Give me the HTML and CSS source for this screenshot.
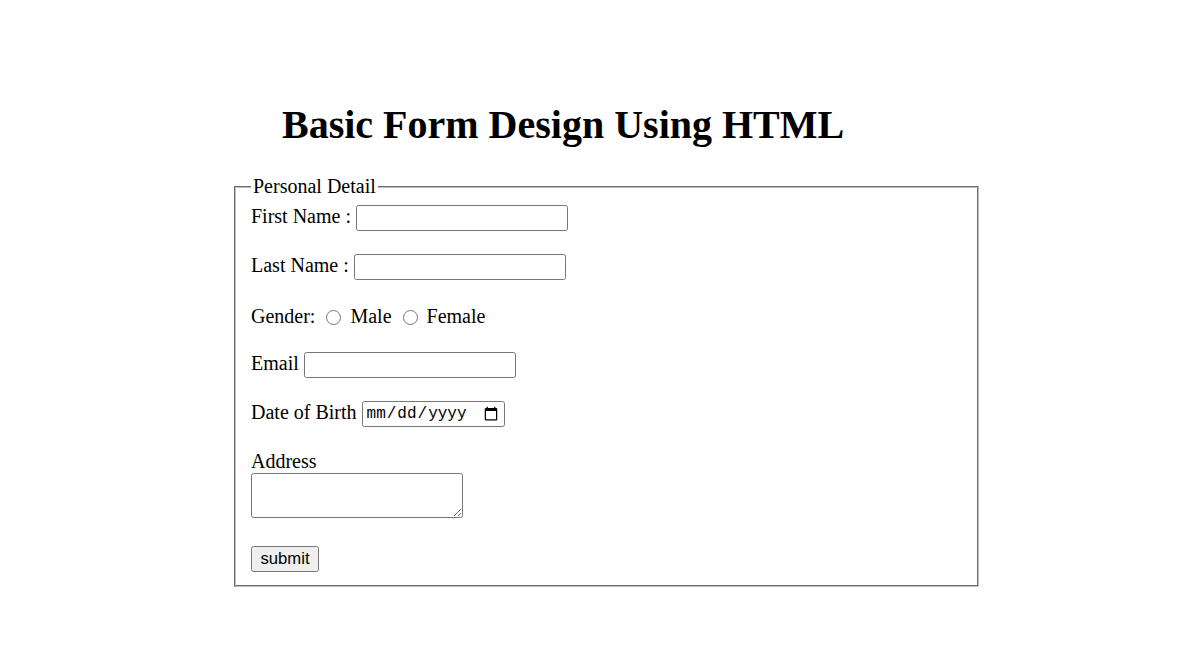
FILE: index.html
```html
<!DOCTYPE html>
<html lang="en">
<head>
<meta charset="utf-8">
<title>Basic Form Design Using HTML</title>
<link rel="stylesheet" href="styles.css">
</head>
<body>
<div class="page">
  <h1 class="title">Basic Form Design Using HTML</h1>
  <form class="form" onsubmit="return false">
    <fieldset class="panel">
      <legend class="legend">Personal Detail</legend>
      <div class="rows">
        <div class="row">
          <label class="label" for="fname">First Name :</label>
          <input class="field" type="text" id="fname">
        </div>
        <div class="row">
          <label class="label" for="lname">Last Name :</label>
          <input class="field" type="text" id="lname">
        </div>
        <div class="row row-gender">
          <span class="label">Gender:</span>
          <input class="radio" type="radio" name="gender" id="male">
          <label class="label" for="male">Male</label>
          <input class="radio" type="radio" name="gender" id="female">
          <label class="label" for="female">Female</label>
        </div>
        <div class="row row-email">
          <label class="label" for="email">Email</label>
          <input class="field" type="email" id="email">
        </div>
        <div class="row">
          <label class="label" for="dob">Date of Birth</label>
          <input class="field field-date" type="date" id="dob">
        </div>
        <div class="block row-address">
          <label class="label label-block" for="address">Address</label>
          <textarea class="area" id="address"></textarea>
        </div>
        <div class="block row-submit">
          <button class="button" type="submit">submit</button>
        </div>
      </div>
    </fieldset>
  </form>
</div>
</body>
</html>
```

FILE: styles.css
```css
html, body {
  margin: 0;
  padding: 0;
  background: #ffffff;
}

body {
  font-family: "Liberation Serif", "Times New Roman", serif;
  font-size: 20px;
  color: #000000;
}

.page {
  width: 745px;
  margin-left: 234px;
  padding-top: 102px;
}

.title {
  margin: 0 0 27px 48px;
  font-size: 40px;
  line-height: 46px;
  font-weight: bold;
}

.form {
  margin: 0;
}

.panel {
  margin: 0;
  padding: 7px 15px 13px 15px;
  border: 2px groove rgb(192, 192, 192);
  min-width: 0;
}

.legend {
  padding: 0 2px;
  line-height: 23px;
  font-size: 20px;
}

.rows {
  display: flex;
  flex-direction: column;
  align-items: flex-start;
}

.row {
  display: flex;
  align-items: center;
  gap: 5px;
  height: 26px;
  line-height: 23px;
}

.row + .row {
  margin-top: 23px;
}

.row-gender {
  margin-top: 25px !important;
}

.row-email {
  margin-top: 21px !important;
}

.label {
  white-space: nowrap;
  position: relative;
  top: -1.5px;
}

.field {
  box-sizing: border-box;
  width: 212px;
  height: 26px;
  margin: 0;
  padding: 1px 2px;
  border: 1px solid #767676;
  border-radius: 2.5px;
  font-family: "Liberation Sans", Arial, sans-serif;
  font-size: 16.67px;
  background: #ffffff;
}

.field-date {
  width: 143px;
  padding: 1px 3px;
  font-family: "Liberation Mono", "Courier New", monospace;
  font-size: 16px;
  color: #000000;
}

.radio {
  width: 15px;
  height: 15px;
  margin: 0 4px 0 6px;
  position: relative;
  top: -1px;
}

.block {
  display: flex;
  flex-direction: column;
  align-items: flex-start;
}

.row-address {
  margin-top: 23px;
}

.label-block {
  display: block;
  line-height: 23px;
  top: 0;
}

.area {
  box-sizing: border-box;
  width: 212px;
  height: 45px;
  margin: 0;
  padding: 2px;
  border: 1px solid #767676;
  border-radius: 2.5px;
  font-family: "Liberation Mono", monospace;
  font-size: 16.67px;
  resize: both;
}

.row-submit {
  margin-top: 28px;
}

.button {
  box-sizing: border-box;
  height: 26px;
  margin: 0;
  padding: 1px 8.5px;
  border: 1px solid #767676;
  border-radius: 2.5px;
  background: #efefef;
  font-family: "Liberation Sans", Arial, sans-serif;
  font-size: 16.67px;
  color: #000000;
}
```
